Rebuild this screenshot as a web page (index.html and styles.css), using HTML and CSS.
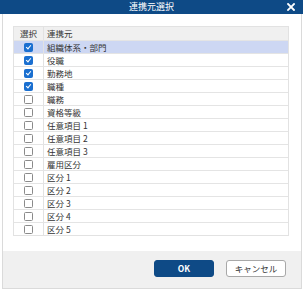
FILE: index.html
```html
<!DOCTYPE html>
<html lang="ja">
<head>
<meta charset="utf-8">
<link rel="stylesheet" href="styles.css">
</head>
<body>
<div class="dialog">
  <div class="titlebar">
    <span class="title">連携元選択</span>
    <svg class="close" width="8" height="8" viewBox="0 0 8 8"><path d="M1 1L7 7M7 1L1 7" stroke="#fff" stroke-width="1.8" stroke-linecap="square"/></svg>
  </div>
  <div class="panel">
    <div class="body">
      <div class="grid">
        <div class="row head"><div class="sel">選択</div><div class="name">連携元</div></div>
        <div class="row active"><div class="sel"><span class="cb on"></span></div><div class="name">組織体系・部門</div></div>
        <div class="row"><div class="sel"><span class="cb on"></span></div><div class="name">役職</div></div>
        <div class="row"><div class="sel"><span class="cb on"></span></div><div class="name">勤務地</div></div>
        <div class="row"><div class="sel"><span class="cb on"></span></div><div class="name">職種</div></div>
        <div class="row"><div class="sel"><span class="cb"></span></div><div class="name">職務</div></div>
        <div class="row"><div class="sel"><span class="cb"></span></div><div class="name">資格等級</div></div>
        <div class="row"><div class="sel"><span class="cb"></span></div><div class="name">任意項目 1</div></div>
        <div class="row"><div class="sel"><span class="cb"></span></div><div class="name">任意項目 2</div></div>
        <div class="row"><div class="sel"><span class="cb"></span></div><div class="name">任意項目 3</div></div>
        <div class="row"><div class="sel"><span class="cb"></span></div><div class="name">雇用区分</div></div>
        <div class="row"><div class="sel"><span class="cb"></span></div><div class="name">区分 1</div></div>
        <div class="row"><div class="sel"><span class="cb"></span></div><div class="name">区分 2</div></div>
        <div class="row"><div class="sel"><span class="cb"></span></div><div class="name">区分 3</div></div>
        <div class="row"><div class="sel"><span class="cb"></span></div><div class="name">区分 4</div></div>
        <div class="row"><div class="sel"><span class="cb"></span></div><div class="name">区分 5</div></div>
      </div>
    </div>
    <div class="footer">
      <button class="btn primary">OK</button>
      <button class="btn secondary">キャンセル</button>
    </div>
  </div>
</div>
</body>
</html>
```
FILE: styles.css
```css
html, body {
  margin: 0;
  padding: 0;
  background: #fff;
}
body {
  font-family: "Noto Sans CJK JP", "Noto Sans", sans-serif;
  color: #333;
}
.dialog {
  width: 303px;
  height: 289px;
  display: flex;
  flex-direction: column;
}
.titlebar {
  height: 14px;
  flex: none;
  background: #0e4a86;
  display: flex;
  align-items: center;
  justify-content: center;
  position: relative;
}
.title {
  color: #fff;
  font-size: 9px;
  line-height: 14px;
}
.close {
  position: absolute;
  right: 8px;
  top: 3px;
}
.panel {
  flex: 1;
  margin: 0 1px 0 2px;
  border-left: 1px solid #dadada;
  border-right: 1px solid #dadada;
  border-bottom: 1px solid #dadada;
  display: flex;
  flex-direction: column;
}
.body {
  flex: 1;
  padding: 12px 12px 0 10px;
}
.grid {
  width: 274px;
  border: 1px solid #e2e2e2;
  font-size: 8.5px;
}
.row {
  display: flex;
  height: 12px;
  border-bottom: 1px solid #e4e4e4;
  line-height: 12px;
}
.row:last-child {
  border-bottom: none;
}
.row.head {
  height: 13px;
  line-height: 13px;
  background: #f0f0f0;
}
.row.active {
  background: #cdd7f3;
}
.sel {
  width: 29px;
  flex: none;
  border-right: 1px solid #e2e2e2;
  display: flex;
  align-items: center;
  justify-content: center;
}
.name {
  flex: 1;
  padding-left: 3px;
  white-space: nowrap;
}
.cb {
  display: block;
  width: 7px;
  height: 7px;
  border: 1px solid #8a8a8a;
  border-radius: 1.5px;
  background: #fff;
  position: relative;
}
.cb.on {
  background: #1a6fd0;
  border-color: #1a6fd0;
}
.cb.on::after {
  content: "";
  position: absolute;
  left: 2.2px;
  top: 0px;
  width: 2px;
  height: 4px;
  border-right: 1.3px solid #fff;
  border-bottom: 1.3px solid #fff;
  transform: rotate(40deg);
}
.footer {
  height: 37px;
  flex: none;
  background: #f0f0f0;
  display: flex;
  justify-content: flex-end;
  align-items: flex-start;
  padding: 9px 15px 0 0;
  box-sizing: border-box;
  gap: 12px;
}
.btn {
  width: 60px;
  height: 17px;
  border-radius: 3px;
  font-family: "Noto Sans CJK JP", "Noto Sans", sans-serif;
  font-size: 8.5px;
  padding: 0;
  line-height: 15px;
  margin: 0;
}
.btn.primary {
  background: #0e4a86;
  border: 1px solid #0e4a86;
  color: #fff;
  font-weight: bold;
}
.btn.secondary {
  background: #fff;
  border: 1px solid #a8a8a8;
  color: #333;
}
```
